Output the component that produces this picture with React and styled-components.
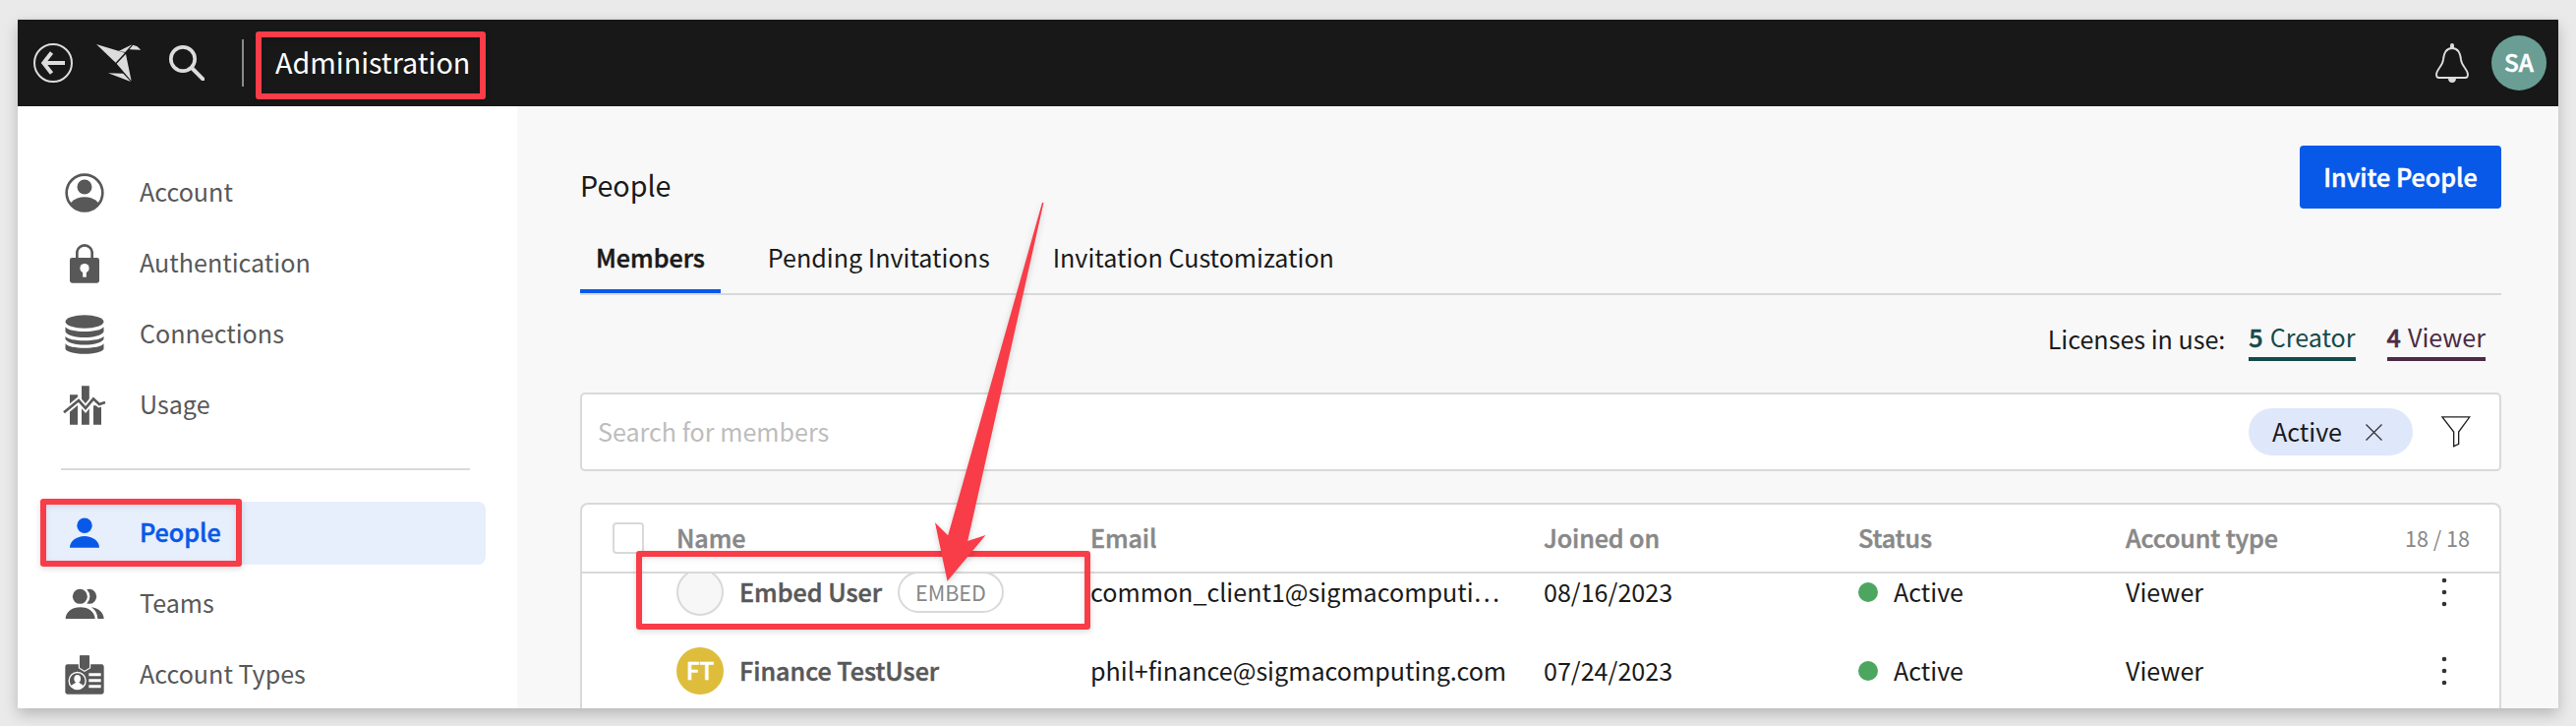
import React from "react";
import styled, { createGlobalStyle, css } from "styled-components";

const Global = createGlobalStyle`
  * { box-sizing: border-box; }
  body {
    margin: 0;
    background: #eaeaea;
    font-family: "Noto Sans CJK KR", "Noto Sans", sans-serif;
    font-size: 25.1px;
    color: #1a1a1a;
    overflow: hidden;
  }
`;

const semibold = css`
  font-weight: 500;
  -webkit-text-stroke: 0.5px currentColor;
`;

const Page = styled.div`
  position: relative;
  width: 2620px;
  height: 738px;
  padding: 20px 18px 18px;
  overflow: hidden;
`;

const Window = styled.div`
  display: flex;
  flex-direction: column;
  height: 700px;
  background: #f8f8f8;
  box-shadow: 0 -2px 0 #dddedd, 0 6px 14px rgba(0, 0, 0, 0.22);
`;

const TopBar = styled.header`
  flex: none;
  display: flex;
  align-items: center;
  height: 88px;
  padding: 0 12px 0 16px;
  background: #181818;
  color: #dcdcdc;
`;

const BackIcon = styled.svg`
  width: 40px;
  height: 40px;
`;

const Logo = styled.svg`
  width: 45.3px;
  height: 38.3px;
  margin-left: 24px;
`;

const SearchIcon = styled.svg`
  width: 36px;
  height: 36px;
  margin-left: 28.7px;
`;

const BarDivider = styled.div`
  width: 2px;
  height: 48px;
  margin: 0 32px 0 38px;
  background: #8a8a8a;
`;

const BarTitle = styled.h1`
  flex: 1;
  margin: 0;
  padding-bottom: 3px;
  font-size: 28.7px;
  font-weight: 400;
  line-height: 40px;
  color: #fff;
`;

const BellIcon = styled.svg`
  width: 34px;
  height: 40px;
  margin-right: 23px;
`;

const Avatar = styled.span`
  flex: none;
  display: flex;
  align-items: center;
  justify-content: center;
  width: ${(p) => p.$size}px;
  height: ${(p) => p.$size}px;
  padding-bottom: 4px;
  border: ${(p) => (p.$outlined ? "2px solid #d9d9d9" : "none")};
  border-radius: 50%;
  background: ${(p) => p.$color};
  color: #fff;
  font-size: 24.3px;
  ${semibold}
`;

const Body = styled.div`
  flex: 1;
  display: flex;
  min-height: 0;
  overflow: hidden;
`;

const Sidebar = styled.nav`
  flex: none;
  width: 508px;
  padding: 56px 32px 0 24px;
  background: #fff;
`;

const NavItem = styled.a`
  display: flex;
  align-items: center;
  gap: 36px;
  height: 64px;
  margin-bottom: 8px;
  padding-left: 24px;
  border-radius: 8px;
  color: ${(p) => (p.$active ? "#0859e8" : "#585858")};
  background: ${(p) => (p.$active ? "#e7eefc" : "transparent")};
  ${(p) => p.$active && semibold}
`;

const NavIcon = styled.svg`
  width: 40px;
  height: 40px;
  overflow: visible;
  fill: currentColor;
`;

const NavLabel = styled.span`
  padding-bottom: 4px;
  line-height: 36px;
`;

const NavDivider = styled.hr`
  height: 2px;
  margin: 32px 16px 32px 20px;
  border: 0;
  background: #d9d9d9;
`;

const Main = styled.main`
  flex: 1;
  display: flex;
  flex-direction: column;
  min-width: 0;
  padding: 40px 58px 0 64px;
`;

const TitleRow = styled.div`
  flex: none;
  display: flex;
  justify-content: space-between;
  height: 64px;
`;

const Title = styled.h2`
  margin: 0;
  padding-top: 15px;
  font-size: 28.7px;
  font-weight: 400;
  line-height: 49px;
`;

const PrimaryButton = styled.button`
  width: 205px;
  padding: 0 0 2px;
  border: 0;
  border-radius: 4px;
  background: #0859e8;
  color: #fff;
  font-family: inherit;
  font-size: 25.1px;
  ${semibold}
`;

const Tabs = styled.div`
  flex: none;
  display: flex;
  gap: 32px;
  margin-top: 12px;
  border-bottom: 2px solid #d9d9d9;
`;

const Tab = styled.a`
  height: 74px;
  padding: 0 16px;
  line-height: 74px;
  box-shadow: ${(p) => (p.$active ? "inset 0 -4px 0 #0859e8" : "none")};
  ${(p) => p.$active && semibold}
`;

const Licenses = styled.div`
  flex: none;
  display: flex;
  justify-content: flex-end;
  height: 46px;
  margin: 21px 16px 32px 0;
  line-height: 46px;
`;

const License = styled.span`
  margin-left: ${(p) => p.$gap}px;
  border-bottom: 4px solid ${(p) => p.$color};
  color: ${(p) => p.$color};
  line-height: 42px;
`;

const Count = styled.span`
  margin-right: 1.5px;
  ${semibold}
`;

const SearchBox = styled.div`
  flex: none;
  display: flex;
  align-items: center;
  height: 80px;
  padding: 0 29px 0 16px;
  border: 2px solid #d9d9d9;
  border-radius: 5px;
  background: #fff;
`;

const Placeholder = styled.span`
  flex: 1;
  padding-bottom: 2px;
  color: #bdbdbd;
`;

const FilterChip = styled.span`
  display: flex;
  align-items: center;
  justify-content: space-between;
  width: 167px;
  height: 48px;
  margin-right: 29px;
  padding: 0 31px 0 24px;
  border-radius: 24px;
  background: #dfe7fa;
`;

const ChipLabel = styled.span`
  padding-bottom: 2px;
  line-height: 36px;
`;

const CloseIcon = styled.svg`
  width: 17px;
  height: 17px;
`;

const FunnelIcon = styled.svg`
  width: 30px;
  height: 32px;
`;

const Table = styled.section`
  flex: 1;
  min-height: 0;
  margin-top: 32px;
  border: 2px solid #d9d9d9;
  border-bottom: 0;
  border-radius: 8px 8px 0 0;
  background: #fff;
  overflow: hidden;
`;

const rowGrid = css`
  display: grid;
  grid-template-columns: 65px 421px 461px 320px 272px 268px 112px;
  align-items: center;
  padding-left: 31px;
`;

const TableHead = styled.div`
  ${rowGrid}
  height: 70px;
  border-bottom: 2px solid #d9d9d9;
  color: #888;
`;

const Checkbox = styled.span`
  width: 32px;
  height: 32px;
  border: 2px solid #d9d9d9;
  border-radius: 4px;
`;

const HeadCell = styled.span`
  padding-bottom: 2px;
  letter-spacing: -0.1px;
  ${semibold}
`;

const Total = styled.span`
  padding: 0 30px 2px 0;
  font-size: 21.6px;
  text-align: right;
`;

/* The list is scrolled slightly, so its first row starts under the head. */
const TableBody = styled.div`
  overflow: hidden;
  & > :first-child { margin-top: -21px; }
`;

const TableRow = styled.div`
  ${rowGrid}
  height: 80px;
`;

const Cell = styled.span`
  padding-bottom: 2px;
  white-space: nowrap;
`;

const NameCell = styled.span`
  grid-column: 2;
  display: flex;
  align-items: center;
`;

const Name = styled.span`
  margin: 0 16px;
  padding-bottom: 2px;
  color: #585858;
  ${semibold}
`;

const Tag = styled.span`
  display: flex;
  align-items: center;
  justify-content: center;
  width: 108px;
  height: 42px;
  padding-bottom: 2px;
  border: 2px solid #d9d9d9;
  border-radius: 21px;
  color: #888;
  font-size: 21.6px;
`;

const StatusCell = styled.span`
  display: flex;
  align-items: center;
  gap: 16px;
`;

const StatusDot = styled.i`
  width: 20px;
  height: 20px;
  border-radius: 50%;
  background: #4da660;
`;

const MoreIcon = styled.svg`
  justify-self: center;
  width: 6px;
  height: 30px;
  fill: #333;
`;

const Highlight = styled.div`
  position: absolute;
  left: ${(p) => p.$x}px;
  top: ${(p) => p.$y}px;
  width: ${(p) => p.$w}px;
  height: ${(p) => p.$h}px;
  border: 6px solid #f83c48;
  border-radius: 3px;
  box-shadow: 0 2px 6px rgba(0, 0, 0, 0.14), inset 0 2px 6px rgba(0, 0, 0, 0.1);
`;

const Arrow = styled.svg`
  position: absolute;
  left: 940px;
  top: 200px;
  width: 130px;
  height: 400px;
  fill: #f83c48;
  filter: drop-shadow(0 2px 3px rgba(0, 0, 0, 0.18));
`;

const AccountIcon = () => (
  <NavIcon viewBox="48 48 120 120">
    <circle cx="108" cy="108" r="55" fill="none" stroke="currentColor" strokeWidth="8" />
    <circle cx="108" cy="90" r="22.5" />
    <path d="M66 138C78 126 93 121 108 121s30 5 42 17C140 156 126 165 108 165S76 156 66 138Z" />
  </NavIcon>
);

const LockIcon = () => (
  <NavIcon viewBox="48 264 120 120">
    <path d="M85 308V291a23 23 0 0 1 46 0v17" fill="none" stroke="currentColor" strokeWidth="8" />
    <rect x="63" y="306" width="90" height="77" rx="7" />
    <circle cx="108" cy="338" r="14" fill="#fff" />
    <rect x="102.500" y="344" width="11" height="21" fill="#fff" />
  </NavIcon>
);

const DatabaseIcon = () => (
  <NavIcon viewBox="48 480 120 120">
    <ellipse cx="108" cy="501" rx="58.500" ry="20" />
    <path d="M49.500 517C60 536 156 536 166.500 517V532C156 555 60 555 49.500 532Z" />
    <path d="M49.500 545C60 563 156 563 166.500 545V554C156 577 60 577 49.500 554Z" />
    <path d="M49.500 568C60 586 156 586 166.500 568V584C156 604 60 604 49.500 584Z" />
  </NavIcon>
);

const UsageIcon = () => (
  <NavIcon viewBox="48 696 120 120">
    <path d="M63 724h24v91H63zM99 697h23.500v118H99zM135 757h24v58h-24z" />
    <path d="M43 780L90 741l21 24 24-29 18 17 19-6" fill="none" stroke="#fff" strokeWidth="19" />
    <path d="M45 778L90 741l21 24 24-29 18 17 18-6" fill="none" stroke="currentColor" strokeWidth="8" />
  </NavIcon>
);

const PeopleIcon = () => (
  <NavIcon viewBox="0 0 40 40">
    <circle cx="20" cy="12.300" r="7.700" />
    <path d="M5 34.800C5 28 12 23 20 23s15 5 15 11.800Z" />
  </NavIcon>
);

const TeamsIcon = () => (
  <NavIcon viewBox="48 12 120 120">
    <circle cx="122" cy="49" r="22.500" />
    <circle cx="95" cy="49" r="29" fill="#fff" />
    <circle cx="94" cy="49" r="22.500" />
    <path d="M50 117C50 96 70 82 95 82s44 14 45 35Z" />
    <path d="M129 82C150 84 166 98 167 117H148C147 101 141 90 129 82Z" />
  </NavIcon>
);

const BadgeIcon = () => (
  <NavIcon viewBox="48 228 120 120">
    <rect x="49" y="256" width="118" height="91" rx="7" />
    <path d="M93 226h30v40l-15 9-15-9z" stroke="#fff" strokeWidth="7" />
    <path d="M93 229h30v37l-15 9-15-9z" />
    <circle cx="86" cy="306" r="25.500" fill="none" stroke="#fff" strokeWidth="4" />
    <ellipse cx="86" cy="300" rx="10" ry="12" fill="#fff" />
    <path d="M67 325C68 316 78 317 82 310h8c4 7 14 6 15 15-9 9-29 9-38 0Z" fill="#fff" />
    <path d="M121 283h37v9h-37zM121 301h37v9h-37zM121 319h37v9h-37z" fill="#fff" />
  </NavIcon>
);

const topNav = [
  ["Account", AccountIcon],
  ["Authentication", LockIcon],
  ["Connections", DatabaseIcon],
  ["Usage", UsageIcon],
];

const bottomNav = [
  ["People", PeopleIcon],
  ["Teams", TeamsIcon],
  ["Account Types", BadgeIcon],
];

const members = [
  {
    name: "Embed User",
    tag: "EMBED",
    initials: "",
    color: "#f7f7f7",
    email: "common_client1@sigmacomputi…",
    joined: "08/16/2023",
  },
  {
    name: "Finance TestUser",
    initials: "FT",
    color: "#debd3c",
    email: "phil+finance@sigmacomputing.com",
    joined: "07/24/2023",
  },
];

const NavList = ({ items, active }) =>
  items.map(([label, Icon]) => (
    <NavItem key={label} $active={label === active}>
      <Icon />
      <NavLabel>{label}</NavLabel>
    </NavItem>
  ));

export default function App() {
  return (
    <Page>
      <Global />
      <Window>
        <TopBar>
          <BackIcon viewBox="0 0 40 40" fill="none" stroke="currentColor">
            <circle cx="20" cy="20" r="19" strokeWidth="2" />
            <path d="M32 20H10.500M18.500 9.500L10.300 20l8.200 10.500" strokeWidth="4" />
          </BackIcon>
          <Logo viewBox="234 75 136 115" fill="currentColor">
            <path d="M234 75L321 101 293 131Z" />
            <path d="M302 96L343 76 322 99Z" />
            <path d="M346 77L359 82 370 92 335 91Z" />
            <path d="M296 134L324 105 341 187Z" />
            <path d="M270 163L316 164 339 189Z" />
          </Logo>
          <SearchIcon viewBox="456 78 108 108" fill="none" stroke="currentColor">
            <circle cx="498" cy="120" r="36.500" strokeWidth="11" />
            <path d="M525 147L559 181" strokeWidth="12" strokeLinecap="round" />
          </SearchIcon>
          <BarDivider />
          <BarTitle>Administration</BarTitle>
          <BellIcon viewBox="51 42 102 120">
            <path
              d="M102 57C84 57 77 71 75 92 73 112 55 120 54 137Q54 147 62 147H142Q150 147 150 137C149 120 131 112 129 92 127 71 120 57 102 57Z"
              fill="none"
              stroke="currentColor"
              strokeWidth="5.500"
            />
            <path d="M96 58V48q0-6 6-6t6 6v10zM90 149h24q-1 13-12 13t-12-13z" fill="currentColor" />
          </BellIcon>
          <Avatar $size={56} $color="#6a9e94">SA</Avatar>
        </TopBar>
        <Body>
          <Sidebar>
            <NavList items={topNav} />
            <NavDivider />
            <NavList items={bottomNav} active="People" />
          </Sidebar>
          <Main>
            <TitleRow>
              <Title>People</Title>
              <PrimaryButton>Invite People</PrimaryButton>
            </TitleRow>
            <Tabs>
              <Tab $active>Members</Tab>
              <Tab>Pending Invitations</Tab>
              <Tab>Invitation Customization</Tab>
            </Tabs>
            <Licenses>
              Licenses in use:
              <License $color="#164a4a" $gap={24}>
                <Count>5</Count> Creator
              </License>
              <License $color="#4c2b45" $gap={32}>
                <Count>4</Count> Viewer
              </License>
            </Licenses>
            <SearchBox>
              <Placeholder>Search for members</Placeholder>
              <FilterChip>
                <ChipLabel>Active</ChipLabel>
                <CloseIcon viewBox="0 0 17 17" stroke="#333" strokeWidth="1.300">
                  <path d="M.5.5l16 16M16.500.5l-16 16" />
                </CloseIcon>
              </FilterChip>
              <FunnelIcon viewBox="669 342 90 96" fill="none" stroke="#222" strokeWidth="4">
                <path d="M672 344.500H755.500L722 390V427L707 434V390Z" />
              </FunnelIcon>
            </SearchBox>
            <Table>
              <TableHead>
                <Checkbox />
                <HeadCell>Name</HeadCell>
                <HeadCell>Email</HeadCell>
                <HeadCell>Joined on</HeadCell>
                <HeadCell>Status</HeadCell>
                <HeadCell>Account type</HeadCell>
                <Total>18 / 18</Total>
              </TableHead>
              <TableBody>
                {members.map((m) => (
                  <TableRow key={m.email}>
                    <NameCell>
                      <Avatar $size={48} $color={m.color} $outlined={!m.initials}>
                        {m.initials}
                      </Avatar>
                      <Name>{m.name}</Name>
                      {m.tag && <Tag>{m.tag}</Tag>}
                    </NameCell>
                    <Cell>{m.email}</Cell>
                    <Cell>{m.joined}</Cell>
                    <StatusCell>
                      <StatusDot />
                      <Cell>Active</Cell>
                    </StatusCell>
                    <Cell>Viewer</Cell>
                    <MoreIcon viewBox="0 0 6 30">
                      <circle cx="3" cy="3" r="2.300" />
                      <circle cx="3" cy="15" r="2.300" />
                      <circle cx="3" cy="27" r="2.300" />
                    </MoreIcon>
                  </TableRow>
                ))}
              </TableBody>
            </Table>
          </Main>
        </Body>
      </Window>
      <Highlight $x={260} $y={32} $w={234} $h={69} />
      <Highlight $x={41} $y={507} $w={205} $h={69} />
      <Highlight $x={647} $y={560} $w={462} $h={80} />
      <Arrow viewBox="940 200 130 400">
        <path d="M1060 206H1061.500L984.200 550 1002.500 544 963.500 590.700 951 531.300 964.200 544.300Z" />
      </Arrow>
    </Page>
  );
}
